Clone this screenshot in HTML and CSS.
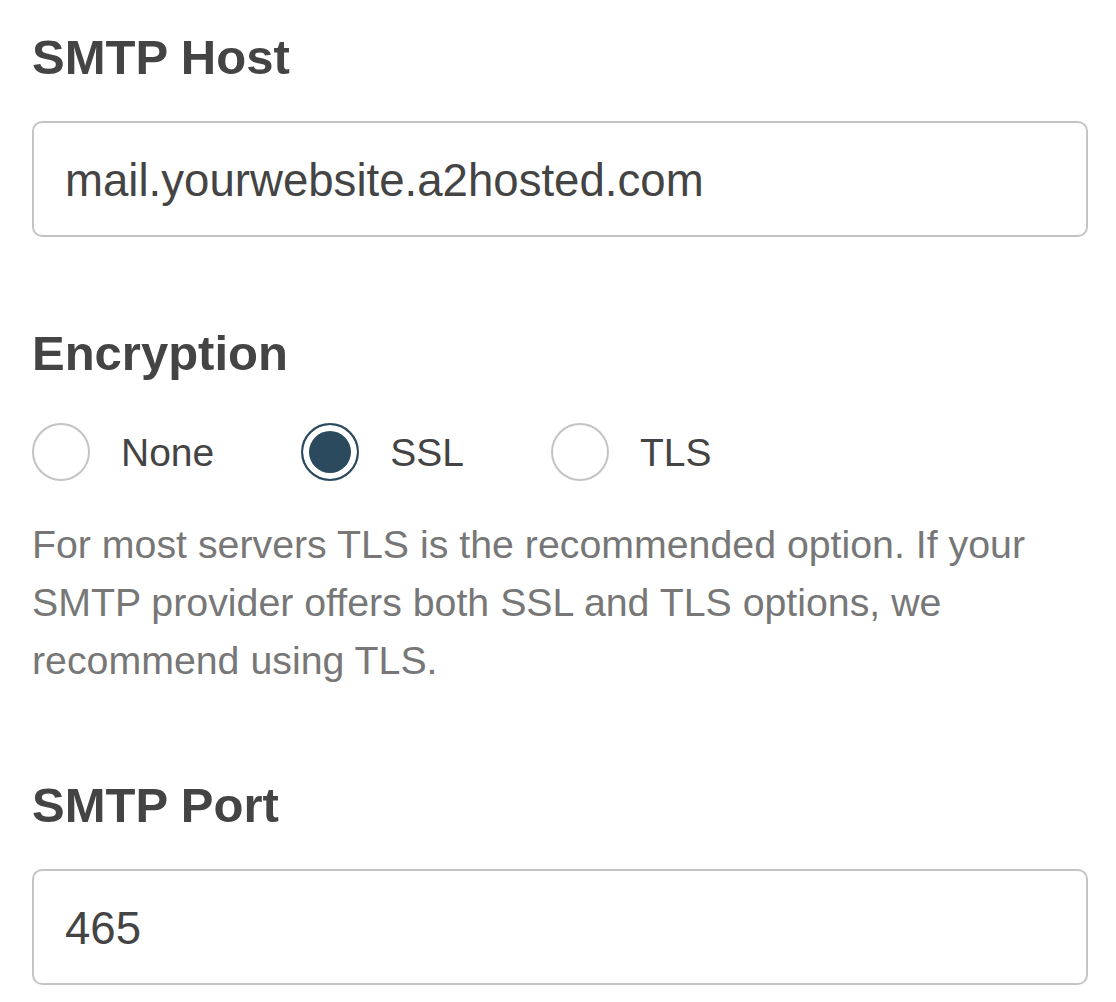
FILE: index.html
```html
<!DOCTYPE html>
<html lang="en">
<head>
<meta charset="utf-8">
<title>SMTP Settings</title>
<link rel="stylesheet" href="styles.css">
</head>
<body>
<form class="form">
  <div class="field">
    <label class="heading" for="host">SMTP Host</label>
    <input class="text-input" id="host" type="text" value="mail.yourwebsite.a2hosted.com">
  </div>
  <div class="field">
    <div class="heading heading-radio">Encryption</div>
    <div class="radio-group">
      <label class="option"><input class="radio" type="radio" name="enc" value="none"><span class="option-label">None</span></label>
      <label class="option"><input class="radio" type="radio" name="enc" value="ssl" checked><span class="option-label">SSL</span></label>
      <label class="option"><input class="radio" type="radio" name="enc" value="tls"><span class="option-label">TLS</span></label>
    </div>
    <p class="help">For most servers TLS is the recommended option. If your SMTP provider offers both SSL and TLS options, we recommend using TLS.</p>
  </div>
  <div class="field">
    <label class="heading" for="port">SMTP Port</label>
    <input class="text-input" id="port" type="text" value="465">
  </div>
</form>
</body>
</html>
```

FILE: styles.css
```css
html, body {
  margin: 0;
  padding: 0;
  background: #ffffff;
}

body {
  font-family: "Liberation Sans", Arial, Helvetica, sans-serif;
  color: #444444;
}

.form {
  padding: 27px 28px 0 32px;
}

.field {
  margin-bottom: 86px;
}

.heading {
  display: block;
  font-size: 49px;
  font-weight: 700;
  line-height: 60px;
  color: #444444;
  margin-bottom: 34px;
}

.heading-radio {
  margin-bottom: 39px;
}

.text-input {
  display: block;
  box-sizing: border-box;
  width: 100%;
  height: 116px;
  margin: 0;
  padding: 3px 31px 0;
  border: 2px solid #c4c4c4;
  border-radius: 10px;
  background: #ffffff;
  font-family: "Liberation Sans", Arial, Helvetica, sans-serif;
  font-size: 45.6px;
  color: #444444;
  outline: none;
}

.radio-group {
  display: flex;
  align-items: center;
  gap: 87px;
  margin-bottom: 33px;
}

.option {
  display: flex;
  align-items: center;
  gap: 31px;
}

.radio {
  -webkit-appearance: none;
  appearance: none;
  box-sizing: border-box;
  width: 58px;
  height: 58px;
  margin: 0;
  border: 2px solid #c4c4c4;
  border-radius: 50%;
  background: #ffffff;
  flex: none;
}

.radio:checked {
  border-color: #2c4a5e;
  background: #2c4a5e;
  box-shadow: inset 0 0 0 6px #ffffff;
}

.option-label {
  font-size: 39px;
  line-height: 58px;
  padding-top: 2px;
  color: #444444;
}

.help {
  margin: 0;
  font-size: 39.3px;
  line-height: 58px;
  color: #777777;
}
```
